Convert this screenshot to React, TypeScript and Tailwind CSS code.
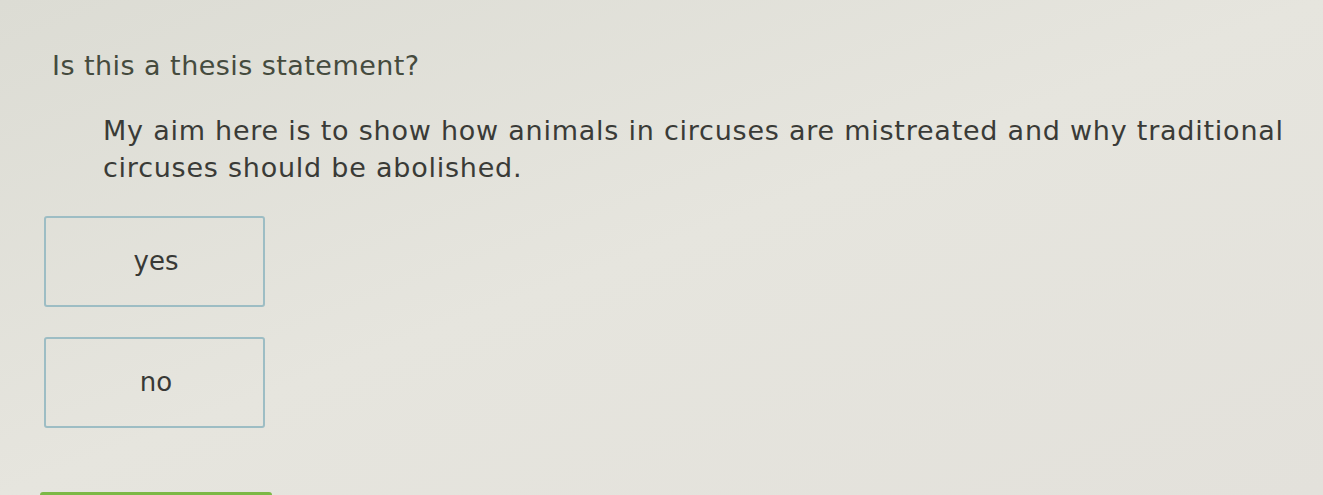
import { FC } from 'react';

const options = ['yes', 'no'];

const App: FC = () => {
  return (
    <div
      className="w-[1323px] h-[495px] overflow-hidden bg-gradient-to-br from-[#dcdcd4] via-[#e6e5de] to-[#e3e1db] text-[#3a3b37]"
      style={{ fontFamily: '"DejaVu Sans", Verdana, sans-serif' }}
    >
      <div className="pl-[52px] pt-[48px]">
        <h1 className="text-[27px] leading-[36px] tracking-[0.45px] text-[#454b3e]">Is this a thesis statement?</h1>

        <p className="pl-[51px] pt-[28px] text-[27px] leading-[37px] tracking-[0.76px]">
          My aim here is to show how animals in circuses are mistreated and why traditional
          <br />
          circuses should be abolished.
        </p>

        <div className="-ml-[8px] mt-[30px] flex flex-col gap-[30px]">
          {options.map((opt) => (
            <button
              key={opt}
              className="flex h-[91px] w-[221px] items-center justify-center rounded-[3px] border-2 border-[#9dbdc4] text-[26px] text-[#383936]"
            >
              <span className="-mt-[1px] pl-[3px]">{opt}</span>
            </button>
          ))}
        </div>
      </div>

      <div className="ml-[40px] mt-[64px] h-[6px] w-[232px] rounded-t-[3px] bg-[#7cb845]" />
    </div>
  );
};

export default App;
